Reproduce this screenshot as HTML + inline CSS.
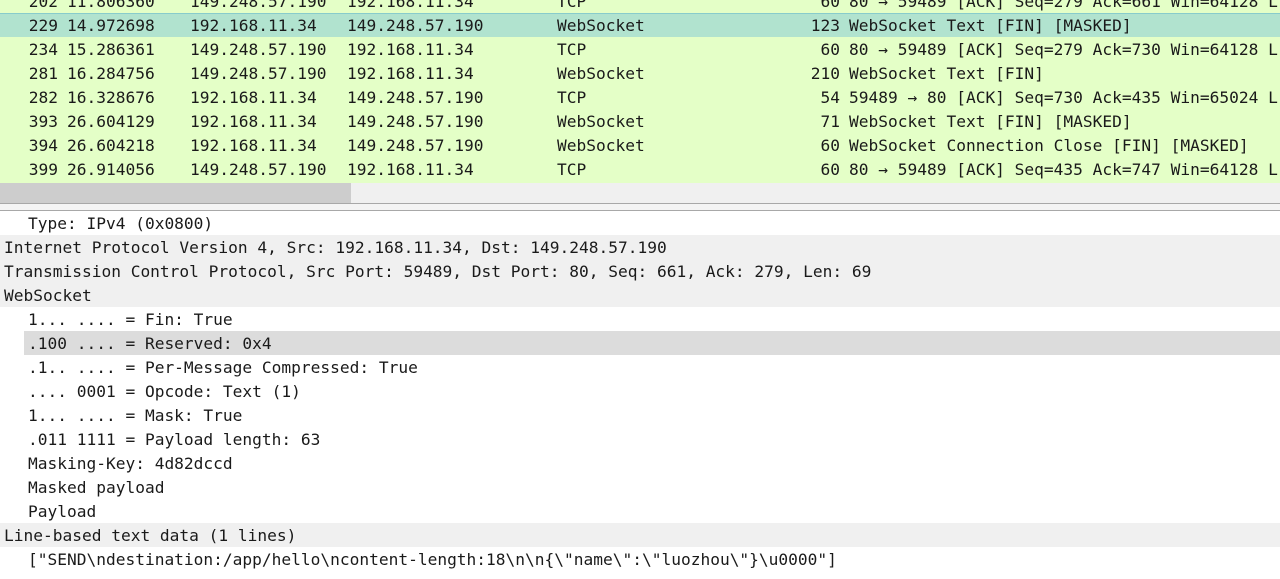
<!DOCTYPE html><html><head><style>
*{margin:0;padding:0}
body{width:1280px;height:579px;overflow:hidden;background:#fff;position:relative;font-family:"DejaVu Sans Mono","Liberation Mono",monospace;font-size:16.2px;color:#1a1a1a}
.r{position:absolute;left:0;width:1280px;height:24px;line-height:26px;white-space:pre;background:#e4ffc7}
.r span{position:absolute;top:0}
.sel{background:#b1e3cf}
.d{position:absolute;left:0;width:1276px;padding-left:4px;height:24px;line-height:26px;white-space:pre}
.c{padding-left:28px;width:1252px}
.g{background:#f0f0f0}
</style></head><body>
<div class="r" style="top:-11px"><span style="right:1222px">202</span><span style="left:67px">11.806360</span><span style="left:190px">149.248.57.190</span><span style="left:347px">192.168.11.34</span><span style="left:557px">TCP</span><span style="right:440px">60</span><span style="left:849px">80 → 59489 [ACK] Seq=279 Ack=661 Win=64128 L</span></div>
<div class="r sel" style="top:13px;border-top:1px solid #8cc;height:23px"><span style="right:1222px;top:-1px">229</span><span style="left:67px;top:-1px">14.972698</span><span style="left:190px;top:-1px">192.168.11.34</span><span style="left:347px;top:-1px">149.248.57.190</span><span style="left:557px;top:-1px">WebSocket</span><span style="right:440px;top:-1px">123</span><span style="left:849px;top:-1px">WebSocket Text [FIN] [MASKED]</span></div>
<div class="r" style="top:37px"><span style="right:1222px">234</span><span style="left:67px">15.286361</span><span style="left:190px">149.248.57.190</span><span style="left:347px">192.168.11.34</span><span style="left:557px">TCP</span><span style="right:440px">60</span><span style="left:849px">80 → 59489 [ACK] Seq=279 Ack=730 Win=64128 L</span></div>
<div class="r" style="top:61px"><span style="right:1222px">281</span><span style="left:67px">16.284756</span><span style="left:190px">149.248.57.190</span><span style="left:347px">192.168.11.34</span><span style="left:557px">WebSocket</span><span style="right:440px">210</span><span style="left:849px">WebSocket Text [FIN]</span></div>
<div class="r" style="top:85px"><span style="right:1222px">282</span><span style="left:67px">16.328676</span><span style="left:190px">192.168.11.34</span><span style="left:347px">149.248.57.190</span><span style="left:557px">TCP</span><span style="right:440px">54</span><span style="left:849px">59489 → 80 [ACK] Seq=730 Ack=435 Win=65024 L</span></div>
<div class="r" style="top:109px"><span style="right:1222px">393</span><span style="left:67px">26.604129</span><span style="left:190px">192.168.11.34</span><span style="left:347px">149.248.57.190</span><span style="left:557px">WebSocket</span><span style="right:440px">71</span><span style="left:849px">WebSocket Text [FIN] [MASKED]</span></div>
<div class="r" style="top:133px"><span style="right:1222px">394</span><span style="left:67px">26.604218</span><span style="left:190px">192.168.11.34</span><span style="left:347px">149.248.57.190</span><span style="left:557px">WebSocket</span><span style="right:440px">60</span><span style="left:849px">WebSocket Connection Close [FIN] [MASKED]</span></div>
<div class="r" style="top:157px;height:26px"><span style="right:1222px">399</span><span style="left:67px">26.914056</span><span style="left:190px">149.248.57.190</span><span style="left:347px">192.168.11.34</span><span style="left:557px">TCP</span><span style="right:440px">60</span><span style="left:849px">80 → 59489 [ACK] Seq=435 Ack=747 Win=64128 L</span></div>
<div style="position:absolute;top:183px;left:0;width:1280px;height:20px;background:#f0f0f0"></div>
<div style="position:absolute;top:183px;left:0;width:351px;height:20px;background:#cdcdcd"></div>
<div style="position:absolute;top:203px;left:0;width:1280px;height:1px;background:#a8a8a8"></div>
<div style="position:absolute;top:204px;left:0;width:1280px;height:6px;background:#f4f4f4"></div>
<div style="position:absolute;top:210px;left:0;width:1280px;height:1px;background:#a8a8a8"></div>
<div class="d c" style="top:211px">Type: IPv4 (0x0800)</div>
<div class="d g" style="top:235px">Internet Protocol Version 4, Src: 192.168.11.34, Dst: 149.248.57.190</div>
<div class="d g" style="top:259px">Transmission Control Protocol, Src Port: 59489, Dst Port: 80, Seq: 661, Ack: 279, Len: 69</div>
<div class="d g" style="top:283px">WebSocket</div>
<div class="d c" style="top:307px">1... .... = Fin: True</div>
<div style="position:absolute;top:331px;left:24px;width:1256px;height:24px;background:#dcdcdc"></div>
<div class="d c" style="top:331px">.100 .... = Reserved: 0x4</div>
<div class="d c" style="top:355px">.1.. .... = Per-Message Compressed: True</div>
<div class="d c" style="top:379px">.... 0001 = Opcode: Text (1)</div>
<div class="d c" style="top:403px">1... .... = Mask: True</div>
<div class="d c" style="top:427px">.011 1111 = Payload length: 63</div>
<div class="d c" style="top:451px">Masking-Key: 4d82dccd</div>
<div class="d c" style="top:475px">Masked payload</div>
<div class="d c" style="top:499px">Payload</div>
<div class="d g" style="top:523px">Line-based text data (1 lines)</div>
<div class="d c" style="top:547px">["SEND\ndestination:/app/hello\ncontent-length:18\n\n{\"name\":\"luozhou\"}\u0000"]</div>
</body></html>
